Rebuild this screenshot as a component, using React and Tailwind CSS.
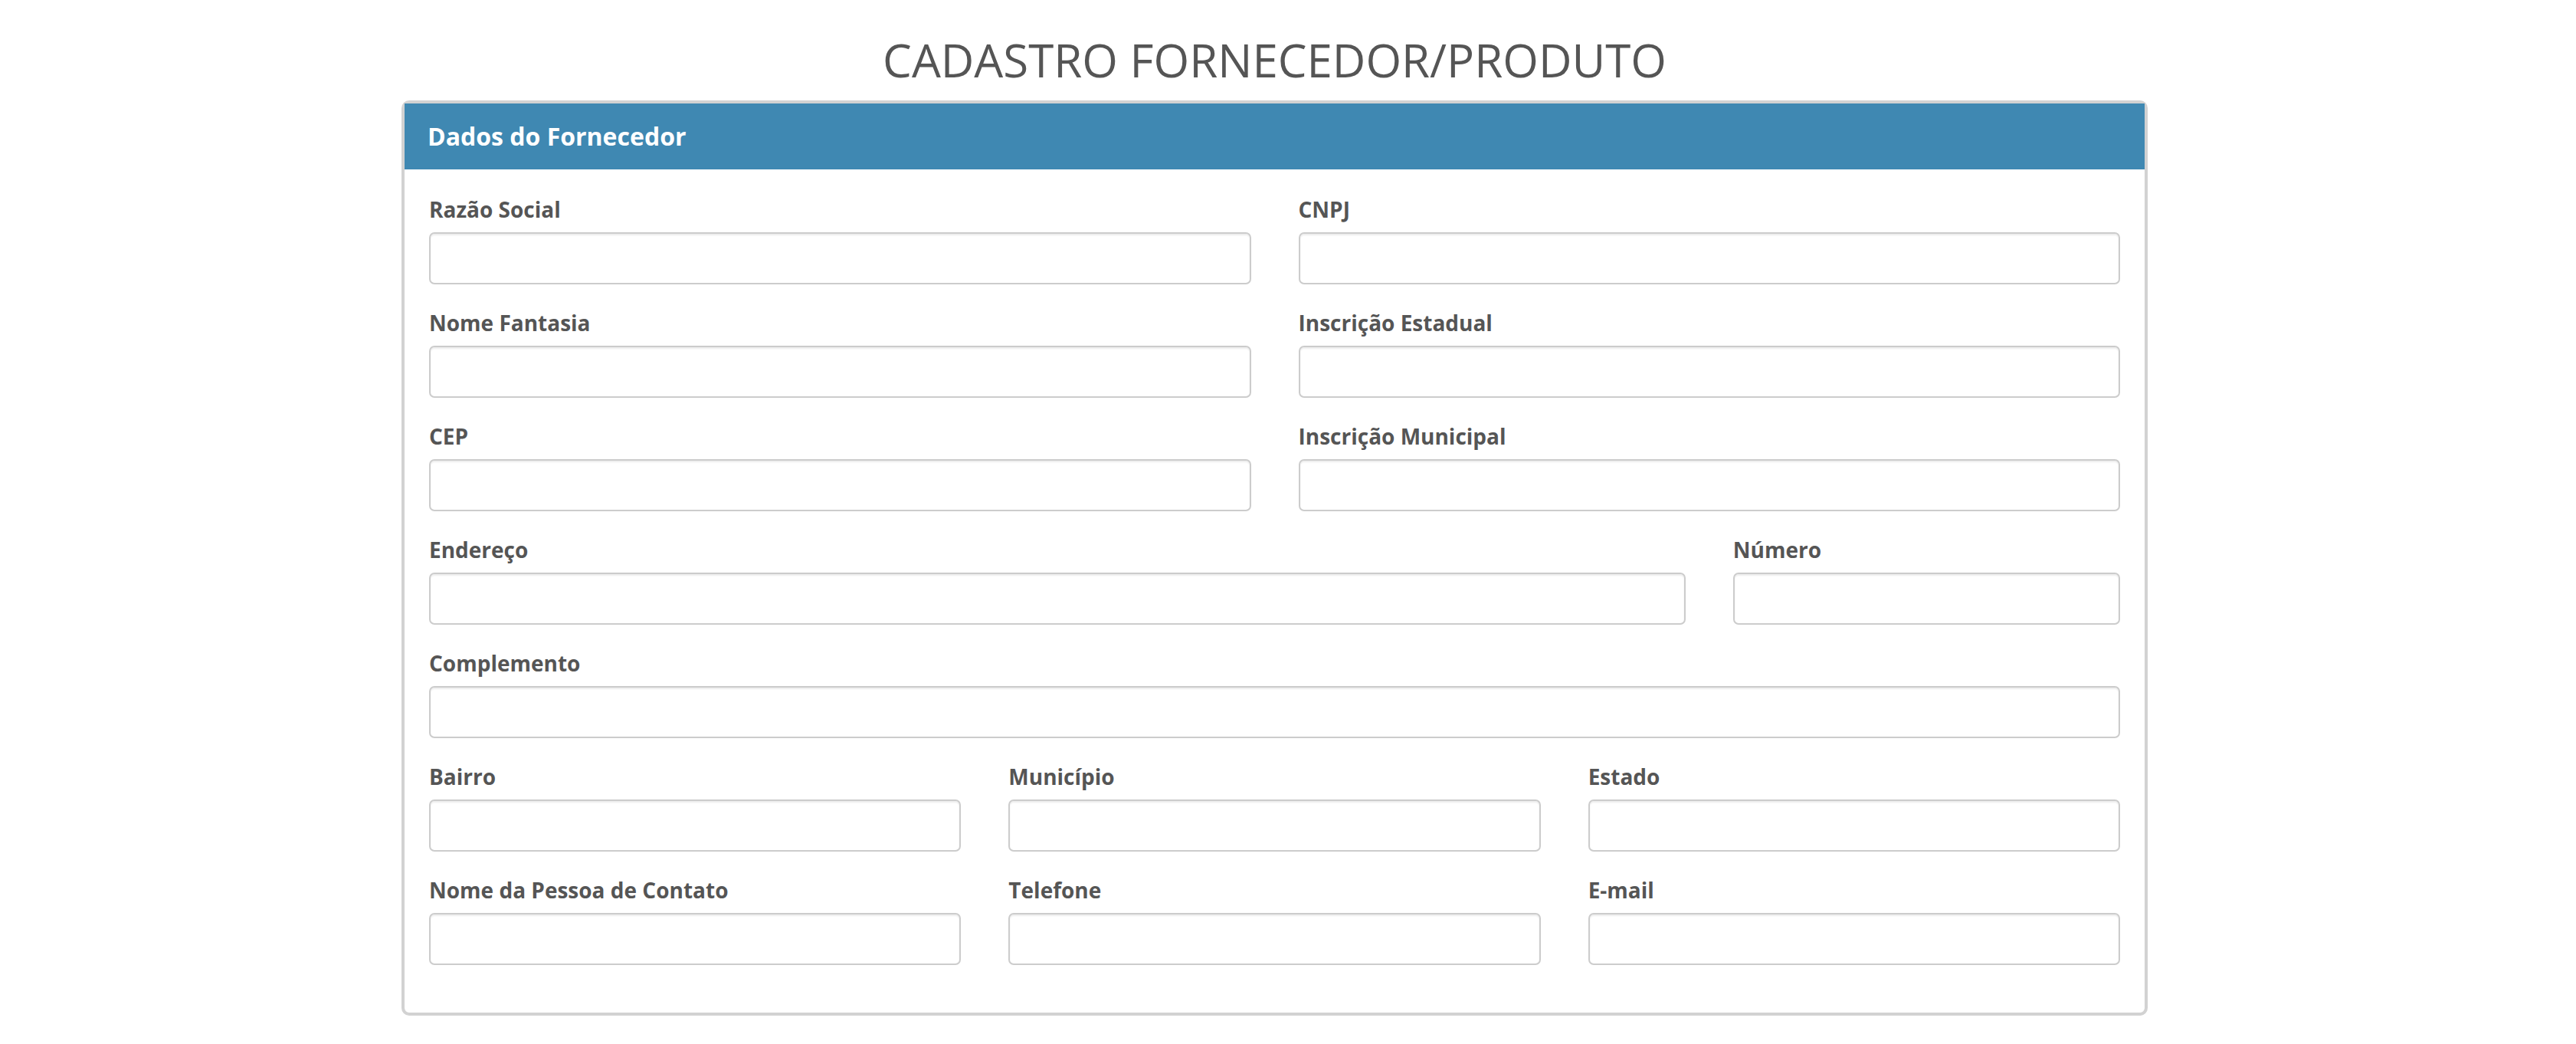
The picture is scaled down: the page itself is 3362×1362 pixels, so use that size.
import React from "react";

function Field({ label, span }) {
  return (
    <div className={span}>
      <label className="block text-[28px] font-bold leading-[40px] mb-[10px] text-[#555]">{label}</label>
      <input
        type="text"
        className="block w-full h-[68px] bg-white border-2 border-[#cccccc] rounded-[7px] shadow-[inset_0_2px_2px_rgba(0,0,0,0.075)] outline-none"
      />
    </div>
  );
}

export default function App() {
  return (
    <div className="min-h-[1362px] bg-white font-['Open_Sans',sans-serif]">
      <div className="ml-[524px] w-[2279px] pt-[37px]">
        <h1 className="text-center text-[60px] leading-[82px] font-normal text-[#555]">
          CADASTRO FORNECEDOR/PRODUTO
        </h1>
        <div className="mt-[12px] rounded-[10px] border-4 border-[#d2d2d2] bg-white">
          <div className="h-[86px] bg-[#3f88b2] px-[30px] flex items-center text-white text-[32px] font-bold leading-[1.1]">
            Dados do Fornecedor
          </div>
          <div className="px-[32px] pt-[32px] pb-[62px] grid grid-cols-12 gap-x-[62px] gap-y-[30px]">
            <Field label="Razão Social" span="col-span-6" />
            <Field label="CNPJ" span="col-span-6" />
            <Field label="Nome Fantasia" span="col-span-6" />
            <Field label="Inscrição Estadual" span="col-span-6" />
            <Field label="CEP" span="col-span-6" />
            <Field label="Inscrição Municipal" span="col-span-6" />
            <Field label="Endereço" span="col-span-9" />
            <Field label="Número" span="col-span-3" />
            <Field label="Complemento" span="col-span-12" />
            <Field label="Bairro" span="col-span-4" />
            <Field label="Município" span="col-span-4" />
            <Field label="Estado" span="col-span-4" />
            <Field label="Nome da Pessoa de Contato" span="col-span-4" />
            <Field label="Telefone" span="col-span-4" />
            <Field label="E-mail" span="col-span-4" />
          </div>
        </div>
      </div>
    </div>
  );
}
